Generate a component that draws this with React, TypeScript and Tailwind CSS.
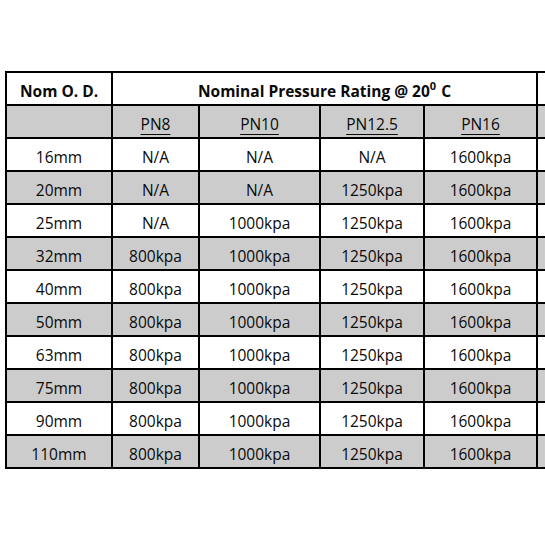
import React from "react";

const rows: [string, string, string, string, string][] = [
  ["16mm", "N/A", "N/A", "N/A", "1600kpa"],
  ["20mm", "N/A", "N/A", "1250kpa", "1600kpa"],
  ["25mm", "N/A", "1000kpa", "1250kpa", "1600kpa"],
  ["32mm", "800kpa", "1000kpa", "1250kpa", "1600kpa"],
  ["40mm", "800kpa", "1000kpa", "1250kpa", "1600kpa"],
  ["50mm", "800kpa", "1000kpa", "1250kpa", "1600kpa"],
  ["63mm", "800kpa", "1000kpa", "1250kpa", "1600kpa"],
  ["75mm", "800kpa", "1000kpa", "1250kpa", "1600kpa"],
  ["90mm", "800kpa", "1000kpa", "1250kpa", "1600kpa"],
  ["110mm", "800kpa", "1000kpa", "1250kpa", "1600kpa"],
];

const cell = "flex items-center justify-center pt-[6px] leading-none";

export default function App() {
  return (
    <div
      className="w-[545px] h-[545px] overflow-hidden bg-white pt-[71px] pl-[5px] text-[15.5px] text-[#0a0a0a]"
      style={{ fontFamily: '"Open Sans", "Noto Sans", sans-serif' }}
    >
      <div className="grid w-max grid-cols-[104px_85px_119px_102px_111px_200px] auto-rows-[31px] gap-[2px] bg-black p-[2px]">
        <div className={`${cell} bg-white font-bold`}>Nom O. D.</div>
        <div className={`${cell} col-span-4 bg-white font-bold`}>
          Nominal Pressure Rating @ 20
          <sup className="relative -top-[6px] text-[11px] align-baseline">0</sup>
          <span className="ml-[5px]">C</span>
        </div>
        <div className="bg-white" />

        <div className="bg-[#cccccc]" />
        {["PN8", "PN10", "PN12.5", "PN16"].map((p) => (
          <div key={p} className={`${cell} bg-[#cccccc] underline underline-offset-[4px]`}>
            {p}
          </div>
        ))}
        <div className="bg-[#cccccc]" />

        {rows.map((r, i) => {
          const bg = i % 2 === 1 ? "bg-[#cccccc]" : "bg-white";
          return (
            <React.Fragment key={r[0]}>
              {r.map((v, j) => (
                <div key={j} className={`${cell} ${bg}`}>
                  {v}
                </div>
              ))}
              <div className={bg} />
            </React.Fragment>
          );
        })}
      </div>
    </div>
  );
}
